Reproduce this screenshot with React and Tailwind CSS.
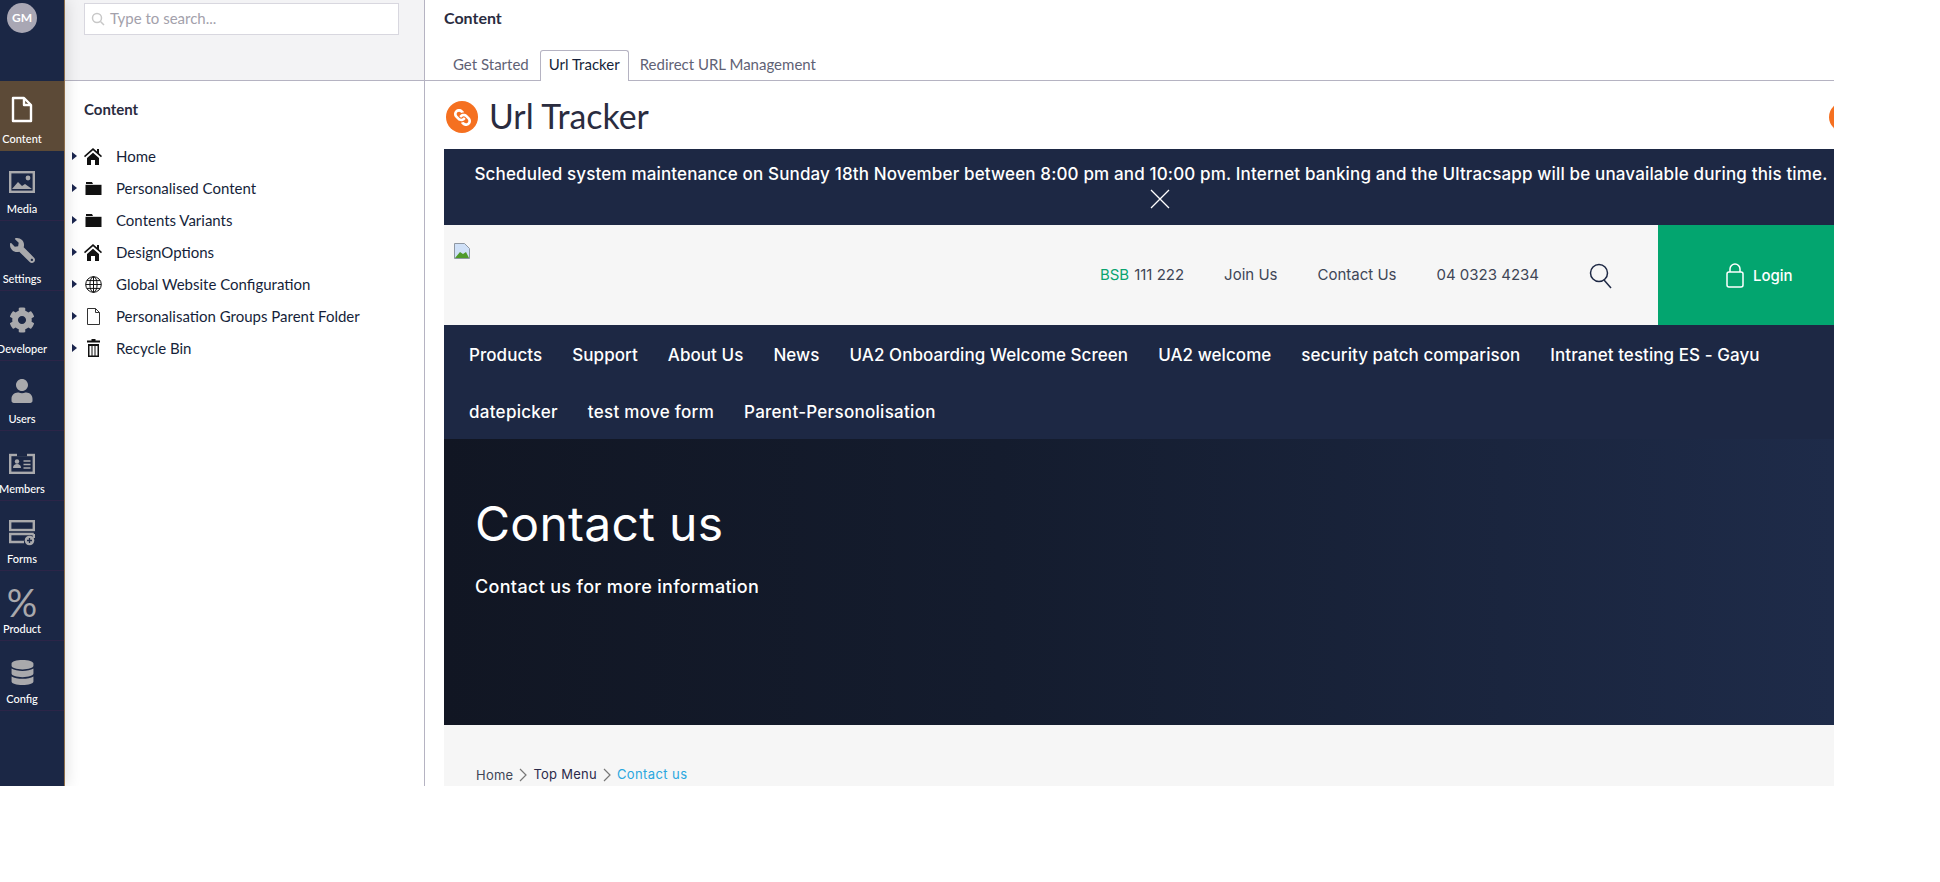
import { FaWrench, FaCog, FaUser, FaDatabase, FaLink } from "react-icons/fa";

function FileIcon() {
  return (
    <svg width="22" height="27" viewBox="0 0 22 27" fill="none" stroke="#fff" strokeWidth="2.4" strokeLinejoin="round">
      <path d="M2 2h11l7 7v16H2z" />
      <path d="M13 2v7h7" />
    </svg>
  );
}

function MediaIcon() {
  return (
    <svg width="26" height="22" viewBox="0 0 26 22">
      <rect x="1.200" y="1.200" width="23.600" height="19.600" fill="none" stroke="#a9a9ac" strokeWidth="2.400" />
      <path d="M3 18l6-7 4 4 3-2 7 5z" fill="#a9a9ac" />
      <circle cx="19" cy="7" r="2.400" fill="#a9a9ac" />
    </svg>
  );
}

function MembersIcon() {
  return (
    <svg width="26" height="21" viewBox="0 0 26 21">
      <rect x="1.200" y="2" width="23.600" height="17.800" fill="none" stroke="#a9a9ac" strokeWidth="2.400" />
      <rect x="8" y="0" width="10" height="3.400" fill="#1b2745" />
      <circle cx="8" cy="8.500" r="2.200" fill="#a9a9ac" />
      <path d="M4 15c0-3 2-4 4-4s4 1 4 4z" fill="#a9a9ac" />
      <path d="M14.500 8h7M14.500 11.500h7M14.500 15h7" stroke="#a9a9ac" strokeWidth="1.600" />
    </svg>
  );
}

function FormsIcon() {
  return (
    <svg width="26" height="26" viewBox="0 0 26 26" fill="none" stroke="#a9a9ac" strokeWidth="2.400">
      <rect x="1.200" y="1.200" width="23.600" height="8.800" />
      <path d="M24.800 14H1.200v8H15" />
      <path d="M24.800 14v4" />
      <circle cx="20.500" cy="20.500" r="4.800" fill="#a9a9ac" stroke="none" />
      <path d="M20.500 18v5M18 20.500h5" stroke="#1b2745" strokeWidth="1.300" />
    </svg>
  );
}

function HomeIcon() {
  return (
    <svg width="18" height="17" viewBox="0 0 18 17" fill="#111">
      <path d="M9 0L0 8l1 1.300L9 2.300l8 7L18 8l-3-2.700V1h-2v2.500z" />
      <path d="M3 10l6-5.300L15 10v7h-4v-5H7v5H3z" />
    </svg>
  );
}

function FolderIcon() {
  return (
    <svg width="17" height="14" viewBox="0 0 17 14" fill="#111">
      <path d="M1 1h6l1 2H1z" />
      <rect x="0.500" y="3.800" width="16" height="10.200" />
    </svg>
  );
}

function GlobeIcon() {
  return (
    <svg width="17" height="17" viewBox="0 0 17 17" fill="none" stroke="#111" strokeWidth="1">
      <circle cx="8.500" cy="8.500" r="7.800" />
      <ellipse cx="8.500" cy="8.500" rx="3.600" ry="7.800" />
      <path d="M8.500 0.700v15.600M0.700 8.500h15.600M1.800 4.600h13.400M1.800 12.400h13.400" />
    </svg>
  );
}

function PageIcon() {
  return (
    <svg width="13" height="17" viewBox="0 0 13 17" fill="none" stroke="#333" strokeWidth="1">
      <path d="M0.500 0.500h8l4 4v12h-12z" />
      <path d="M8.500 0.500v4h4" />
    </svg>
  );
}

function BinIcon() {
  return (
    <svg width="13" height="18" viewBox="0 0 13 18" fill="#111">
      <path d="M4.500 0h4v1.500H13v2H0v-2h4.500z" />
      <path fillRule="evenodd" d="M1 5h11v13H1zM2.500 7v9.500h2V7zM5.500 7v9.500h2V7zM8.500 7v9.500h2V7z" />
    </svg>
  );
}

const sideItems = [
  { label: "Content", icon: <FileIcon />, active: true, iconBox: "pb-[4px]" },
  { label: "Media", icon: <MediaIcon />, iconBox: "pb-[4px]" },
  { label: "Settings", icon: <FaWrench size={25} color="#a9a9ac" className="-scale-x-100" />, iconBox: "pb-[4px]" },
  { label: "Developer", icon: <FaCog size={26} color="#a9a9ac" />, iconBox: "pb-[4px]" },
  { label: "Users", icon: <FaUser size={24} color="#a9a9ac" />, iconBox: "pb-[4px]" },
  { label: "Members", icon: <MembersIcon />, iconBox: "pb-[3px]" },
  { label: "Forms", icon: <FormsIcon />, iconBox: "pb-[1px]" },
  { label: "Product", icon: <span className="text-[38px] leading-[30px] text-[#a9a9ac]">%</span>, iconBox: "pb-0" },
  { label: "Config", icon: <FaDatabase size={25} color="#a9a9ac" />, iconBox: "pb-[2px]" },
];

const treeItems = [
  { label: "Home", icon: <HomeIcon /> },
  { label: "Personalised Content", icon: <FolderIcon /> },
  { label: "Contents Variants", icon: <FolderIcon /> },
  { label: "DesignOptions", icon: <HomeIcon /> },
  { label: "Global Website Configuration", icon: <GlobeIcon /> },
  { label: "Personalisation Groups Parent Folder", icon: <PageIcon /> },
  { label: "Recycle Bin", icon: <BinIcon /> },
];

const navRowOne = ["Products", "Support", "About Us", "News", "UA2 Onboarding Welcome Screen", "UA2 welcome", "security patch comparison", "Intranet testing ES - Gayu"];
const navRowTwo = ["datepicker", "test move form", "Parent-Personolisation"];

function Chevron() {
  return (
    <svg className="mx-[6px] mt-[2px] shrink-0" width="8" height="14" viewBox="0 0 8 14" fill="none" stroke="#777" strokeWidth="1.200">
      <path d="M1 1l6 6-6 6" />
    </svg>
  );
}

function Sidebar() {
  return (
    <div className="relative z-10 w-[65px] shrink-0 bg-[#1b2745] border-r border-[#8d6e4b] shadow-[2px_0_14px_rgba(0,0,0,0.12)]">
      <div className="h-[81px] pt-[3px] pl-[7px]">
        <div className="w-[30px] h-[30px] rounded-full bg-[#a9a7b4] text-white text-[12px] font-bold flex items-center justify-center">GM</div>
      </div>
      {sideItems.map((item) => (
        <div
          key={item.label}
          className={`h-[70px] pr-[20px] flex flex-col items-center border-b border-[#2c2548] ${item.active ? "bg-[#5c4a37] border-transparent" : ""}`}
        >
          <div className={`h-[46px] flex items-end justify-center ${item.iconBox}`}>{item.icon}</div>
          <div className="mt-[5px] text-[11px] leading-[14px] text-white whitespace-nowrap font-medium">{item.label}</div>
        </div>
      ))}
    </div>
  );
}

function TreePanel() {
  return (
    <div className="w-[360px] shrink-0 border-r border-[#b5b3c2] flex flex-col">
      <div className="h-[81px] shrink-0 bg-[#f3f3f5] border-b border-[#b5b3c2] pl-[19px] pt-[3px]">
        <div className="w-[315px] h-[32px] bg-white border border-[#d8d7df] flex items-center pl-[6px]">
          <svg width="14" height="14" viewBox="0 0 14 14" fill="none" stroke="#c8c8c8" strokeWidth="1.500">
            <circle cx="6" cy="6" r="4.500" />
            <path d="M9.500 9.500l3.500 3.500" />
          </svg>
          <span className="ml-[5px] text-[15px] leading-[20px] -mt-[3px] text-[#a3a1ab]">Type to search...</span>
        </div>
      </div>
      <div className="pl-[19px] pt-[19px]">
        <div className="text-[15px] leading-[18px] font-bold text-[#2a2c3f]">Content</div>
      </div>
      <div className="mt-[22px] pl-[7px]">
        {treeItems.map((item) => (
          <div key={item.label} className="h-[32px] flex items-center">
            <span className="w-0 h-0 border-y-[4px] border-y-transparent border-l-[5px] border-l-[#1b264f]" />
            <span className="w-[18px] ml-[7px] flex justify-center">{item.icon}</span>
            <span className="ml-[14px] text-[15px] text-[#161f3a]">{item.label}</span>
          </div>
        ))}
      </div>
    </div>
  );
}

function SiteHeader() {
  return (
    <div className="h-[100px] bg-[#f6f6f6] flex">
      <div className="pl-[10px] pt-[18px] flex-1">
        <svg width="16" height="16" viewBox="0 0 16 16">
          <path d="M0.500 0.500h10l5 5v10h-15z" fill="#cfe0f7" stroke="#8f98a3" />
          <path d="M1 15l5-6 3 2 3-2 3 6z" fill="#4f9a2c" />
        </svg>
      </div>
      <div className="flex items-center text-[15px] text-[#3f4657] pr-[45px] pt-[1px]">
        <span className="text-[#0aa36f]">BSB</span>
        <span className="ml-[5px]">111 222</span>
        <span className="ml-[40px]">Join Us</span>
        <span className="ml-[40px]">Contact Us</span>
        <span className="ml-[40px]">04 0323 4234</span>
        <svg className="ml-[50px]" width="24" height="26" viewBox="0 0 24 26" fill="none" stroke="#1d2844" strokeWidth="1.500">
          <circle cx="10" cy="10" r="8.500" />
          <path d="M15 17l7 8" />
        </svg>
      </div>
      <div className="w-[176px] bg-[#03a56f] flex items-center pl-[67px] text-white">
        <svg width="20" height="25" viewBox="0 0 20 25" fill="none" stroke="#fff" strokeWidth="1.500">
          <rect x="2" y="9" width="16" height="15" rx="2" />
          <path d="M5 9V6a5 5 0 0 1 10 0v3" />
        </svg>
        <span className="ml-[8px] mt-[2px] text-[15px] font-medium">Login</span>
      </div>
    </div>
  );
}

function Site() {
  return (
    <div className="ml-[19px] font-['Inter',sans-serif]">
      <div className="h-[76px] bg-[#1d2844] text-white text-[17px] font-medium text-center pl-[24px] pt-[13px]">
        <div className="leading-[24px] whitespace-nowrap tracking-[0.15px]">Scheduled system maintenance on Sunday 18th November between 8:00 pm and 10:00 pm. Internet banking and the Ultracsapp will be unavailable during this time.</div>
        <div className="flex justify-center mt-[3px] pl-[18px]">
          <svg width="20" height="20" viewBox="0 0 20 20" stroke="#fff" strokeWidth="1.300">
            <path d="M1 1l18 18M19 1L1 19" />
          </svg>
        </div>
      </div>
      <SiteHeader />
      <div className="h-[114px] pt-[2px] bg-[#1d2844] text-white text-[17px] font-medium pl-[25px]">
        <div className="h-[57px] flex items-center gap-[30px] tracking-[0.06px]">
          {navRowOne.map((n) => <span key={n}>{n}</span>)}
        </div>
        <div className="h-[55px] flex items-center gap-[30px] pt-[2px] tracking-[0.28px]">
          {navRowTwo.map((n) => <span key={n}>{n}</span>)}
        </div>
      </div>
      <div className="h-[286px] bg-gradient-to-r from-[#111623] via-[#141c2e] via-40% to-[#1e2b49] text-white pl-[31px] pt-[56px]">
        <div className="text-[48px] leading-[58px] tracking-[0.3px]">Contact us</div>
        <div className="mt-[22px] text-[18px] leading-[24px] font-medium tracking-[0.32px]">Contact us for more information</div>
      </div>
      <div className="h-[61px] bg-[#f6f6f6] pl-[32px] pt-[41px] flex items-start text-[13px] leading-[16px] text-[#3f4657] tracking-[0.25px]">
        <span className="mt-[1px]">Home</span>
        <Chevron />
        <span className="text-[#2b2a4a]">Top Menu</span>
        <Chevron />
        <span className="text-[#2aa7df] tracking-[0.4px]">Contact us</span>
      </div>
    </div>
  );
}

export default function App() {
  return (
    <div className="w-[1834px] h-[786px] flex overflow-hidden bg-white font-['Lato',sans-serif]">
      <Sidebar />
      <TreePanel />
      <div className="flex-1 min-w-0 overflow-hidden">
        <div className="h-[81px] border-b border-[#b5b3c2] relative">
          <div className="pl-[19px] pt-[9px] text-[16px] leading-[18px] font-bold text-[#2a2c3f]">Content</div>
          <div className="absolute left-[19px] bottom-[-1px] flex text-[15px] text-[#5f6275] h-[31px]">
            <div className="pl-[9px] pr-[11px] pb-[2px] flex items-center">Get Started</div>
            <div className="px-[8px] pb-[3px] flex items-center bg-white border border-b-0 border-[#b5b3c2] rounded-t-[3px] text-[#161f3a]">Url Tracker</div>
            <div className="px-[11px] pb-[2px] flex items-center">Redirect URL Management</div>
          </div>
        </div>
        <div className="h-[68px] relative flex items-center pl-[21px] pt-[4px]">
          <div className="w-[32px] h-[32px] rounded-full bg-[#f57020] flex items-center justify-center">
            <FaLink size={17} color="#fff" className="rotate-90" />
          </div>
          <div className="ml-[11px] text-[33.8px] leading-none text-[#2a2c3f]">Url Tracker</div>
          <div className="absolute left-[1404px] top-[21px] w-[30px] h-[30px] rounded-full bg-[#f57020]" />
        </div>
        <Site />
      </div>
    </div>
  );
}
